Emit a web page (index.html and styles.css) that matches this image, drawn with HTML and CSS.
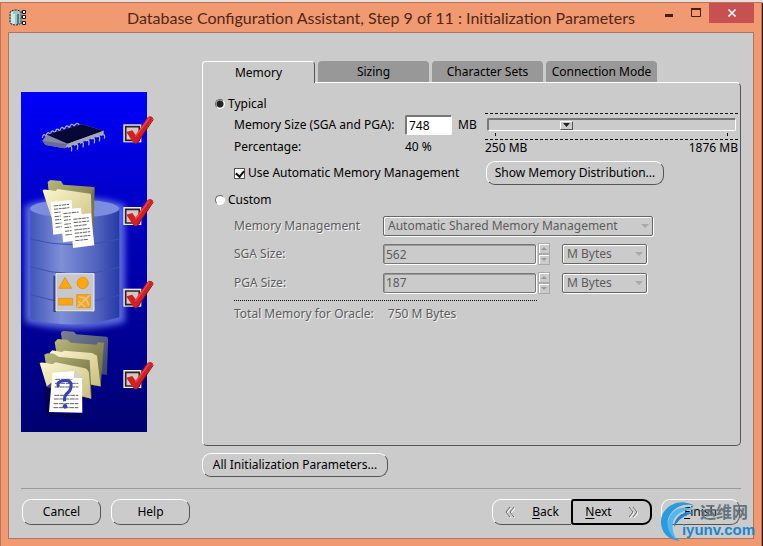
FILE: index.html
```html
<!DOCTYPE html>
<html lang="en">
<head>
<meta charset="utf-8">
<title>Database Configuration Assistant</title>
<link rel="stylesheet" href="styles.css">
</head>
<body>
<div class="window">
  <header class="titlebar">
    <svg class="app-icon" width="18" height="18" viewBox="0 0 18 18" aria-hidden="true">
      <path d="M1 4C1 0 12 0 12 4V13C12 17 1 17 1 13Z" fill="#9fc4c8" stroke="#14292c" stroke-width="1" stroke-dasharray="2 1"/>
      <path d="M3 3V14M5 5V15" stroke="#e5f5f5" stroke-width="1.4"/><path d="M9 5V15" stroke="#4b7f87" stroke-width="2"/>
      <path d="M12 3H14M12 8H14M12 14H14" stroke="#111"/>
      <path d="M13.500 1.500H16.500V4.500H13.500ZM13.500 6.500H16.500V9.500H13.500ZM13.500 12.500H16.500V15.500H13.500Z" fill="#fff" stroke="#111"/>
    </svg>
    <h1 class="title">Database Configuration Assistant, Step 9 of 11 : Initialization Parameters</h1>
    <div class="window-controls">
      <button class="ctl" aria-label="Minimize"><svg width="10" height="12" viewBox="0 0 10 12"><path d="M1 8.500H9" stroke="#4a1e0c" stroke-width="3"/></svg></button>
      <button class="ctl" aria-label="Maximize"><svg width="12" height="12" viewBox="0 0 12 12"><path d="M1.500 2.500H10.500V9.500H1.500Z" fill="none" stroke="#4a1e0c"/><path d="M1 2H11" stroke="#4a1e0c" stroke-width="2"/></svg></button>
      <button class="ctl ctl-close" aria-label="Close"><svg width="10" height="10" viewBox="0 0 10 10"><path d="M1.500 1.500L8.500 8.500M8.500 1.500L1.500 8.500" stroke="#fff" stroke-width="1.700"/></svg></button>
    </div>
  </header>

  <div class="client">
    <main class="main">
      <svg class="banner" width="126" height="340" viewBox="0 0 126 340" aria-hidden="true">
        <defs>
          <linearGradient id="sky" x2="0" y2="1"><stop stop-color="#0000fa"/><stop offset=".35" stop-color="#0000c4"/><stop offset="1" stop-color="#000070"/></linearGradient>
          <linearGradient id="drum"><stop stop-color="#4156b8"/><stop offset=".35" stop-color="#7f8fd8"/><stop offset=".75" stop-color="#5063bd"/><stop offset="1" stop-color="#263aa5"/></linearGradient>
          <linearGradient id="paper" x2="1" y2="1"><stop stop-color="#fbf6cf"/><stop offset="1" stop-color="#c9bd7c"/></linearGradient>
          <linearGradient id="olive" x2="1" y2="1"><stop stop-color="#b9b87a"/><stop offset="1" stop-color="#65633a"/></linearGradient>
          <linearGradient id="slate" x2="1" y2="1"><stop stop-color="#7c828c"/><stop offset="1" stop-color="#3b4272"/></linearGradient>
          <filter id="glow" x="-20%" y="-20%" width="140%" height="140%"><feGaussianBlur stdDeviation="9"/></filter>
          <g id="check">
            <path d="M0 0H54V54H0Z" fill="#f2eeee"/><path d="M7 7H48V48H7Z" fill="#d2c8c6" stroke="#2a2022" stroke-width="5"/>
            <path d="M9 23L27 18L37 32L72 -20Q82 -29 90 -18L44 54Q36 62 28 52Z" fill="#d31f24"/>
            <path d="M36 37L78 -19" stroke="#ee4643" stroke-width="4"/>
            <path d="M42 56L90 -15" stroke="#7c1014" stroke-width="3"/>
          </g>
          <g id="sheet">
            <path d="M0 6L62 0L72 96L8 104Z" fill="#fff"/>
            <path d="M9 18L55 13M10 28L56 23M11 38L50 34M12 50L58 45M13 60L59 55M14 71L60 66M15 82L53 78" stroke="#62625c" stroke-width="3" stroke-dasharray="13 2 8 2"/>
          </g>
        </defs>
        <path d="M0 0H126V340H0Z" fill="url(#sky)"/>
        <g transform="translate(-11 -8) scale(.33333)">
          <path d="M45 365Q190 315 345 362V715Q190 755 45 715Z" fill="#6c7ce8" opacity=".85" filter="url(#glow)"/>
          <path d="M61 375V705Q190 740 328 700V375Z" fill="url(#drum)"/>
          <ellipse cx="194" cy="374" rx="134" ry="27" fill="#7c8de0"/>
          <path d="M61 465Q190 500 328 465M61 548Q190 590 328 550M61 632Q190 675 328 634" fill="none" stroke="#3c50ad" stroke-width="3"/>
          <path d="M97 162Q100 145 108 157Q112 138 121 152Q125 132 135 147Q140 127 149 142Q154 122 163 136Q170 118 178 131Q184 114 193 126Q200 112 208 123" fill="none" stroke="#a8acc4" stroke-width="4"/>
          <path d="M97 170L111 152L215 121L281 140L277 153L163 193L107 183Z" fill="#8587a8"/>
          <path d="M111 152L215 121L281 140L173 179Z" fill="#080837"/>
          <path d="M97 170L165 180L173 179L163 193L107 183Z" fill="#696c94"/>
          <path d="M173 179L281 140V150L166 191Z" fill="#a6a6bb"/>
          <path d="M174 190Q189 181 184 202M192 184Q207 174 202 197M210 178Q224 169 219 190M227 171Q241 163 236 184M243 165Q257 157 253 178M258 159Q273 151 268 172M272 154Q288 147 283 164" fill="none" stroke="#a9adc5" stroke-width="4"/>
          <path d="M113 294L121 288L153 291L160 302L253 309L248 432L125 415Z" fill="url(#olive)"/>
          <path d="M98 320Q98 315 109 317L137 321L143 315L246 330Q252 333 250 345L247 440L128 411Z" fill="url(#paper)"/>
          <path d="M243 331L254 310L251 431L246 438Z" fill="#7a744a"/>
          <use href="#sheet" x="122" y="348"/><use href="#sheet" x="151" y="371"/><use href="#sheet" x="181" y="388"/>
        </g>
        <g transform="translate(-11 162) scale(.33333)">
          <path d="M130 65H138V164H245V174H130Z" fill="#222c68" opacity=".75"/>
          <path d="M138 59H252V171H138Z" fill="#c8c8cc" stroke="#efeff2" stroke-width="3"/>
          <g fill="#ffa60c" stroke="#d08a25" stroke-width="2"><path d="M165 70L185 103H146Z"/><circle cx="218" cy="87" r="17"/><path d="M146 133H188V153H146Z"/><path d="M200 122H241V161H200Z"/><path d="M201 160L240 123M207 129Q232 128 236 154M204 142L226 160" fill="none" stroke="#d9c9a8" stroke-width="4"/></g>
          <path d="M153 239Q153 230 163 231L191 233L199 241L290 248Q296 250 294 265L291 363L169 345Z" fill="url(#slate)"/>
          <path d="M134 265L143 255L172 257L182 266L259 272L265 265L282 266L272 398L153 377Z" fill="url(#olive)"/>
          <path d="M119 296L127 289L155 294L163 290L246 297L261 305L272 397L143 373Z" fill="url(#paper)"/>
          <path d="M103 302Q111 295 132 299L145 308L239 318L245 434L119 402Z" fill="url(#olive)"/>
          <path d="M89 327Q93 323 127 331L137 325L222 342Q233 344 237 356L243 434L111 400Z" fill="url(#paper)"/>
          <path d="M101 405L126 385L119 477L215 482L210 496L109 485Z" fill="#000043" opacity=".7"/>
          <path d="M127 356L195 351L216 370L217 476L117 474Z" fill="#fff"/><path d="M195 351L192 370L216 371Z" fill="#d7d4ca" stroke="#999" stroke-width="1"/>
          <path d="M136 376H187M135 388H205M134 399H205M133 424H205M132 435H205M131 449H205M130 461H205" stroke="#5d5d69" stroke-width="3" stroke-dasharray="14 2"/>
          <path d="M146 399Q138 383 160 380Q187 377 183 399Q181 412 169 420Q162 428 164 442" fill="none" stroke="#3545b7" stroke-width="9"/><circle cx="165" cy="457" r="7" fill="#3545b7"/>
        </g>
        <g transform="translate(-11 -8) scale(.33333)"><use href="#check" x="340" y="121"/><use href="#check" x="340" y="369"/><use href="#check" x="340" y="614"/><use href="#check" x="340" y="858"/></g>
      </svg>

      <section class="content">
        <nav class="tabs" role="tablist">
          <button class="tab tab-active" role="tab" aria-selected="true">Memory</button>
          <button class="tab" role="tab">Sizing</button>
          <button class="tab" role="tab">Character Sets</button>
          <button class="tab" role="tab">Connection Mode</button>
        </nav>
        <div class="panel">
          <label class="choice"><input class="radio" type="radio" name="mode" checked>Typical</label>
          <div class="typical">
            <div class="figures">
              <label for="memsize">Memory Size (SGA and PGA):</label>
              <span class="amount"><input class="field size" id="memsize" type="text" value="748">MB</span>
              <span>Percentage:</span>
              <span>40 %</span>
            </div>
            <div class="scale">
              <div class="track">
                <input class="slider" type="range" min="250" max="1876" value="748" aria-label="Memory size">
                <svg class="thumb-mark" width="7" height="4" viewBox="0 0 7 4" aria-hidden="true"><path d="M0 0H7L3.500 4Z" fill="#222"/></svg>
                <div class="ticks"></div>
              </div>
              <div class="limits"><span>250 MB</span><span>1876 MB</span></div>
            </div>
          </div>
          <div class="auto">
            <label class="choice"><input class="tick" type="checkbox" checked>Use Automatic Memory Management</label>
            <button class="btn">Show Memory Distribution...</button>
          </div>
          <label class="choice custom-choice"><input class="radio" type="radio" name="mode">Custom</label>
          <div class="custom">
            <label for="mm">Memory Management</label>
            <span class="combo combo-wide"><select id="mm" disabled><option>Automatic Shared Memory Management</option></select></span>
            <label for="sga">SGA Size:</label>
            <div class="quantity">
              <input class="field" id="sga" type="text" value="562" disabled>
              <span class="spinner"><button aria-label="Increase SGA" disabled></button><button class="down" aria-label="Decrease SGA" disabled></button></span>
              <span class="combo"><select aria-label="SGA unit" disabled><option>M Bytes</option></select></span>
            </div>
            <label for="pga">PGA Size:</label>
            <div class="quantity">
              <input class="field" id="pga" type="text" value="187" disabled>
              <span class="spinner"><button aria-label="Increase PGA" disabled></button><button class="down" aria-label="Decrease PGA" disabled></button></span>
              <span class="combo"><select aria-label="PGA unit" disabled><option>M Bytes</option></select></span>
            </div>
          </div>
          <div class="total"><span>Total Memory for Oracle:</span><span>750 M Bytes</span></div>
        </div>
        <button class="btn all-params">All Initialization Parameters...</button>
      </section>
    </main>

    <footer class="footer">
      <button class="btn nav-btn">Cancel</button>
      <button class="btn nav-btn">Help</button>
      <span class="steps">
        <button class="btn nav-btn back"><svg width="10" height="12" viewBox="0 0 10 12" aria-hidden="true"><path d="M5 1L1 6L5 11M9 1L5 6L9 11" transform="translate(1 1)" fill="none" stroke="#fff"/><path d="M5 1L1 6L5 11M9 1L5 6L9 11" fill="none" stroke="#666"/></svg><span><u>B</u>ack</span></button>
        <button class="btn nav-btn next"><span><u>N</u>ext</span><svg width="10" height="12" viewBox="0 0 10 12" aria-hidden="true"><path d="M1 1L5 6L1 11M5 1L9 6L5 11" transform="translate(1 1)" fill="none" stroke="#fff"/><path d="M1 1L5 6L1 11M5 1L9 6L5 11" fill="none" stroke="#666"/></svg></button>
      </span>
      <button class="btn nav-btn"><span><u>F</u>inish</span></button>
    </footer>
  </div>

  <div class="watermark">
    <svg class="swirl" width="42" height="42" viewBox="0 0 42 42" aria-hidden="true">
      <path d="M35 6C19-4 1 7 1 22C1 32 8 40 20 41C7 33 4 21 12 12C18 5 27 3 35 6Z" fill="#2a9be0"/>
      <path d="M37 11C24 3 10 9 8 22C7 30 11 36 16 39C10 27 12 18 20 13C26 9 32 9 37 11Z" fill="#52b7ee"/>
      <path d="M33 13C23 10 14 18 14 27C18 20 24 15 33 13Z" fill="#1b85cf"/>
    </svg>
    <div class="mark-text"><span class="mark-cn" lang="zh">运维网</span><span class="mark-url">iyunv.com</span></div>
  </div>
</div>
</body>
</html>
```
FILE: styles.css
```css
* { box-sizing: border-box; }

body {
  margin: 0;
  padding: 2px 1px 0 0;
  min-height: 100vh;
  display: flex;
  background: linear-gradient(#e6dfdc 3px, #24151c 3px);
  font: 12px/16px "Noto Sans", "Noto Sans CJK SC", sans-serif;
  color: #000;
}

button, input, select { font: inherit; color: inherit; margin: 0; }

.window {
  flex: 1;
  position: relative;
  display: flex;
  flex-direction: column;
  padding: 0 7px 7px;
  background: #f19a72;
  border: 1px solid #b97457;
  border-bottom: 0;
}

.titlebar { display: flex; align-items: center; height: 29px; }
.app-icon { margin-left: 1px; }
.title {
  flex: 1;
  margin: 0;
  padding-left: 80px;
  text-align: center;
  white-space: nowrap;
  font: 16px/28px Lato, sans-serif;
  color: #4f2718;
}
.window-controls { display: flex; align-self: flex-start; }
.ctl {
  display: flex;
  align-items: center;
  justify-content: center;
  width: 27px;
  height: 20px;
  padding: 0;
  border: 0;
  background: none;
}
.ctl-close { width: 45px; background: #c75050; }

.client {
  flex: 1;
  display: flex;
  flex-direction: column;
  padding: 28px 12px 13px;
  background: #cbcbcb;
  border: 1px solid #a87862;
}
.main { flex: 1; display: grid; grid-template-columns: 126px 1fr; gap: 55px; }
.banner { margin-top: 31px; overflow: visible; }
.content { display: flex; flex-direction: column; align-items: flex-start; }

.tabs { display: flex; gap: 3px; position: relative; z-index: 1; }
.tab {
  width: 111px;
  height: 21px;
  padding: 0;
  border: 0;
  border-radius: 4px 4px 0 0;
  background: #989898;
  line-height: 16px;
  white-space: nowrap;
}
.tab-active {
  width: 113px;
  height: 22px;
  margin-bottom: -1px;
  background: #cbcbcb;
  border: 1px solid #fff;
  border-right-color: #555;
  border-bottom: 0;
}
.panel {
  flex: 1;
  align-self: stretch;
  padding: 12px 2px 8px 12px;
  border: 1px solid #fff;
  border-right-color: #555;
  border-bottom-color: #555;
  border-radius: 0 5px 5px 5px;
}

.choice { display: flex; align-items: center; height: 18px; }
.radio {
  appearance: none;
  width: 10px;
  height: 10px;
  margin-right: 3px;
  border: 1px solid #666;
  border-right-color: #fff;
  border-bottom-color: #fff;
  border-radius: 50%;
  background: #fff;
}
.radio:checked { background: radial-gradient(#222 3px, #ddd 4px); }
.tick {
  appearance: none;
  position: relative;
  width: 11px;
  height: 11px;
  margin-right: 3px;
  border: 1px solid #555;
  background: #fff;
}
.tick:checked::after {
  content: "";
  position: absolute;
  left: 2px;
  top: 0;
  width: 4px;
  height: 6px;
  border: solid #111;
  border-width: 0 2px 2px 0;
  transform: rotate(40deg);
}

.typical { display: flex; justify-content: space-between; margin-left: 19px; }
.figures {
  display: grid;
  grid-template-columns: 171px auto;
  grid-template-rows: 24px 20px;
  align-items: center;
}
.amount { display: flex; align-items: center; gap: 6px; }
.field {
  height: 20px;
  padding: 0 2px;
  background: #fff;
  border: 2px solid #777;
  border-right: 1px solid #fff;
  border-bottom: 1px solid #fff;
  border-radius: 2px;
}
.size { width: 47px; }
.scale { width: 253px; }
.track {
  position: relative;
  height: 27px;
  padding: 4px 2px 0;
  border-top: 1px dashed #111;
  border-bottom: 1px dashed #111;
}
.slider {
  appearance: none;
  display: block;
  width: 100%;
  height: 13px;
  background: #cbcbcb;
  border: 1px solid #fff;
  border-top: 2px solid #777;
  border-left: 2px solid #777;
  border-radius: 2px;
}
.slider::-webkit-slider-thumb {
  appearance: none;
  width: 13px;
  height: 9px;
  background: #cbcbcb;
  border: 1px solid #fff;
  border-right-color: #555;
  border-bottom-color: #555;
}
.thumb-mark { position: absolute; left: 78px; top: 9px; pointer-events: none; }
.ticks { height: 3px; margin: 2px 8px 0; border: solid #111; border-width: 0 1px; }
.limits { display: flex; justify-content: space-between; line-height: 16px; }

.auto { display: flex; align-items: center; height: 32px; margin-left: 19px; }
.auto .btn { margin-left: auto; margin-right: 74px; }

.btn {
  display: flex;
  align-items: center;
  justify-content: center;
  width: 178px;
  height: 24px;
  padding: 0;
  background: #cbcbcb;
  border: 1px solid #fff;
  border-right-color: #555;
  border-bottom-color: #555;
  border-radius: 9px;
  white-space: nowrap;
}
.all-params { width: 186px; margin: 7px 0 11px; }

.custom-choice { margin-top: 2px; }
.custom {
  display: grid;
  grid-template-columns: 149px auto;
  grid-template-rows: 28px 28px 29px;
  align-items: center;
  justify-content: start;
  margin: 3px 0 0 19px;
}
.custom, .total { color: #5c5c5c; text-shadow: 1px 1px #f5f5f5; }
.quantity { display: flex; align-items: center; }
.custom .field {
  width: 153px;
  background: transparent;
  border: 1px solid #777;
  box-shadow: inset 1px 1px #999, 1px 1px #fff;
}
.spinner { display: flex; flex-direction: column; width: 12px; margin: 0 12px 0 2px; }
.spinner button {
  display: flex;
  align-items: center;
  justify-content: center;
  height: 11px;
  padding: 0;
  background: none;
  border: 1px solid #aaa;
  box-shadow: inset 1px 1px #fff;
}
.spinner button::after { content: ""; border: 3px solid transparent; border-top: 0; border-bottom-color: #999; }
.spinner .down::after { transform: rotate(180deg); }
.combo { position: relative; display: block; width: 85px; height: 20px; }
.combo-wide { width: 270px; }
.combo select {
  appearance: none;
  width: 100%;
  height: 20px;
  padding: 0 4px;
  background: transparent;
  border: 1px solid #666;
  border-radius: 2px;
  box-shadow: inset 1px 1px #fff, 1px 1px #fff;
  opacity: 1;
}
.combo::after {
  content: "";
  position: absolute;
  right: 4px;
  top: 8px;
  border: 4px solid transparent;
  border-top-color: #aaa;
  border-bottom: 0;
}
.total { margin: 3px 0 0 19px; padding-top: 5px; display: flex; gap: 14px; width: 303px; border-top: 1px dotted #111; }

.footer { display: flex; gap: 10px; padding: 10px 1px 0 1px; border-top: 1px solid #999; }
.nav-btn { width: 79px; height: 26px; }
.steps { display: flex; margin-left: auto; margin-right: -1px; }
.back { width: 79px; gap: 17px; border-right: 0; border-radius: 9px 0 0 9px; }
.next { width: 81px; gap: 16px; border: 2px solid #000; border-radius: 3px 9px 9px 3px; }
u { text-underline-offset: 2px; }

.watermark { position: absolute; right: 6px; bottom: 4px; display: flex; pointer-events: none; }
.swirl { margin-right: -20px; }
.mark-text { display: flex; flex-direction: column; }
.mark-cn { margin-left: 18px; font: bold 16px/22px "Noto Sans CJK SC", sans-serif; color: #66747e; }
.mark-url { font: bold 15px/16px "Liberation Sans", sans-serif; color: #1c86cf; }
```
